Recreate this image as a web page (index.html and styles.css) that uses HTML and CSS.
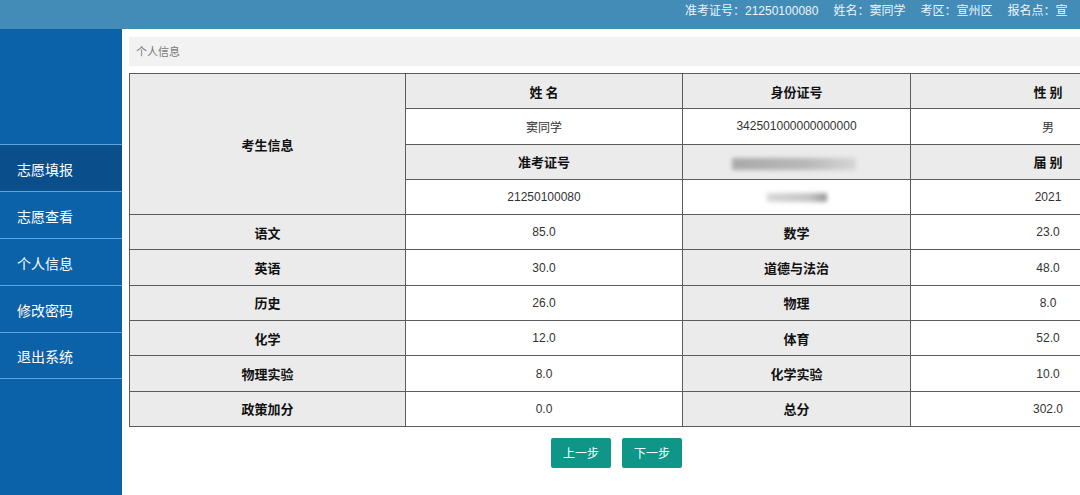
FILE: index.html
```
<!DOCTYPE html>
<html lang="zh-CN">
<head>
    <meta charset="UTF-8">
    <title>个人信息</title>
    <link rel="stylesheet" href="styles.css">
</head>
<body>

<!-- 顶部考生信息 -->
<div class="topbar">
    <span>准考证号：21250100080</span>
    <span>姓名：窦同学</span>
    <span>考区：宣州区</span>
    <span>报名点：宣</span>
</div>

<div class="layout">
    <div class="sidebar">
        <a class="nav-item active">志愿填报</a>
        <a class="nav-item">志愿查看</a>
        <a class="nav-item">个人信息</a>
        <a class="nav-item">修改密码</a>
        <a class="nav-item last">退出系统</a>
    </div>

    <div class="main">
        <div class="crumb">个人信息</div>

        <table class="info">
            <colgroup>
                <col style="width:276px">
                <col style="width:277px">
                <col style="width:228px">
                <col style="width:275px">
            </colgroup>
            <tr>
                <th rowspan="4">考生信息</th>
                <th>姓 名</th>
                <th>身份证号</th>
                <th>性 别</th>
            </tr>
            <tr>
                <td>窦同学</td>
                <td>342501000000000000</td>
                <td>男</td>
            </tr>
            <tr>
                <th>准考证号</th>
                <th><span class="blur blur-lg"></span></th>
                <th>届 别</th>
            </tr>
            <tr>
                <td>21250100080</td>
                <td><span class="blur blur-sm"></span></td>
                <td>2021</td>
            </tr>
            <tr>
                <th>语文</th><td>85.0</td>
                <th>数学</th><td>23.0</td>
            </tr>
            <tr>
                <th>英语</th><td>30.0</td>
                <th>道德与法治</th><td>48.0</td>
            </tr>
            <tr>
                <th>历史</th><td>26.0</td>
                <th>物理</th><td>8.0</td>
            </tr>
            <tr>
                <th>化学</th><td>12.0</td>
                <th>体育</th><td>52.0</td>
            </tr>
            <tr>
                <th>物理实验</th><td>8.0</td>
                <th>化学实验</th><td>10.0</td>
            </tr>
            <tr>
                <th>政策加分</th><td>0.0</td>
                <th>总分</th><td>302.0</td>
            </tr>
        </table>

        <div class="actions">
            <button class="btn">上一步</button>
            <button class="btn">下一步</button>
        </div>
    </div>
</div>

</body>
</html>
```

FILE: styles.css
```
body {
    margin: 0;
    height: 495px;
    overflow: hidden;
    font-family: "Liberation Sans", "Noto Sans CJK SC", sans-serif;
    background-color: #fff;
}

/* 顶栏 */
.topbar {
    height: 29px;
    box-sizing: border-box;
    padding: 3px 0 0 685px;
    background-color: #438cb8;
    color: #eef4f8;
    font-size: 12px;
    line-height: 16px;
    display: flex;
    gap: 15px;
    white-space: nowrap;
    overflow: hidden;
}

.layout {
    display: flex;
    height: 466px;
}

/* 左侧菜单 */
.sidebar {
    width: 122px;
    flex-shrink: 0;
    padding-top: 115px;
    background-color: #0c62a8;
    font-family: "Noto Sans CJK SC", sans-serif;
}

.nav-item {
    display: flex;
    align-items: center;
    height: 46px;
    padding: 1px 0 0 17px;
    box-sizing: border-box;
    height: 47px;
    border-top: 1px solid #5aa6e4;
    color: #fff;
    font-size: 14px;
    cursor: pointer;
}

.nav-item.last {
    border-bottom: 1px solid #5aa6e4;
}

.nav-item.active {
    background-color: #0a4f8c;
}

/* 内容区 */
.main {
    flex: 1;
    padding: 8px 0 0 7px;
    overflow: hidden;
}

.crumb {
    width: 1060px;
    height: 29px;
    line-height: 29px;
    padding-left: 7px;
    margin-bottom: 7px;
    background-color: #f2f2f2;
    color: #777;
    font-size: 11px;
    font-family: "Noto Sans CJK SC", sans-serif;
}

.info {
    width: 1056px;
    table-layout: fixed;
    border-collapse: collapse;
    border: 1px solid #444;
}

.info th,
.info td {
    height: 34.3px;
    padding: 0;
    border: 1px solid #5c5c5c;
    text-align: center;
    vertical-align: middle;
}

.info th {
    background-color: #ebebeb;
    color: #111;
    font-size: 13px;
    font-weight: bold;
    font-family: "Noto Sans CJK SC", sans-serif;
}

.info td {
    background-color: #fff;
    color: #333;
    font-size: 12px;
}

.blur {
    display: inline-block;
    vertical-align: middle;
    filter: blur(2px);
}

.blur-lg {
    width: 124px;
    height: 12px;
    margin-left: -6px;
    background: linear-gradient(to right, #a9a9a9, #b8b8b8 60%, #d6d6d6);
}

.blur-sm {
    width: 60px;
    height: 9px;
    background: linear-gradient(to right, #d8d8d8, #c4c4c4 70%, #9a9a9a);
}

/* 按钮 */
.actions {
    display: flex;
    gap: 11px;
    margin-top: 11px;
    padding-left: 422px;
}

.btn {
    width: 60px;
    height: 30px;
    border: none;
    border-radius: 2px;
    background-color: #0f9688;
    color: #fff;
    font-size: 12px;
    font-family: "Noto Sans CJK SC", sans-serif;
    cursor: pointer;
}
```
